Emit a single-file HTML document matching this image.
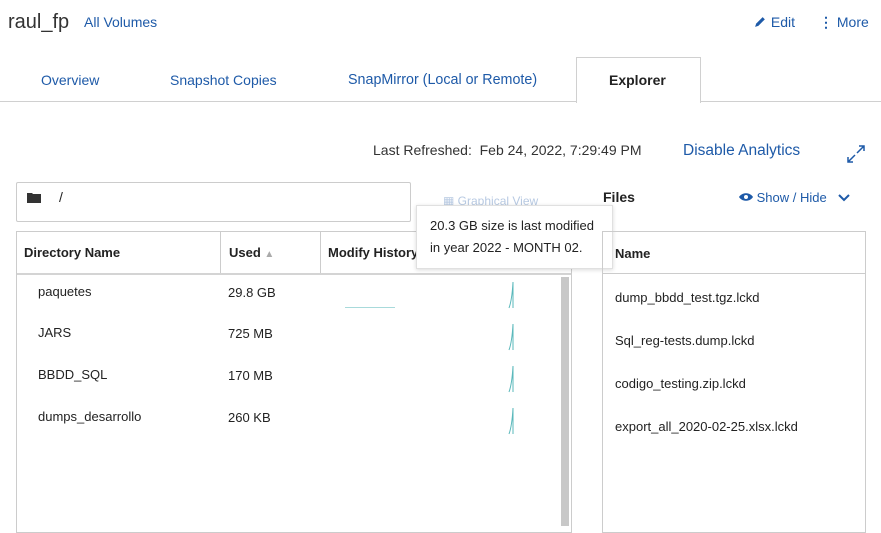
<!DOCTYPE html>
<html><head><meta charset="utf-8"><style>
body{margin:0;width:881px;height:526px;overflow:hidden;background:#fff;font-family:"Liberation Sans",sans-serif;color:#222;position:relative}
.a{position:absolute;white-space:nowrap}
.b{color:#1e5aa8}
.s13{font-size:13px}
</style></head><body>
<div class="a" style="left:8px;top:11px;font-size:20px;color:#333">raul_fp</div>
<div class="a b" style="left:84px;top:14px;font-size:14px">All Volumes</div>
<div class="a b" style="left:754px;top:14px;font-size:14px">
<svg width="13" height="13" viewBox="0 0 12 12" style="vertical-align:-1px"><path d="M1 11l1-3 6-6 2 2-6 6z" fill="#1e5aa8"/></svg> Edit</div>
<div class="a b" style="left:819px;top:14px;font-size:14px"><span style="font-weight:bold">&#8942;</span> More</div>
<div class="a" style="left:0;top:101px;width:881px;height:1px;background:#d0d0d0"></div>
<div class="a" style="left:576px;top:57px;width:123px;height:45px;border:1px solid #d0d0d0;border-bottom:none;background:#fff"></div>
<div class="a b" style="left:41px;top:72px;font-size:14px">Overview</div>
<div class="a b" style="left:170px;top:72px;font-size:14px">Snapshot Copies</div>
<div class="a b" style="left:348px;top:72px;font-size:14.3px">SnapMirror (Local or Remote)</div>
<div class="a" style="left:609px;top:72px;font-size:14px;font-weight:bold;color:#222">Explorer</div>
<div class="a" style="left:373px;top:142px;font-size:14px;color:#333">Last Refreshed:&nbsp; Feb 24, 2022, 7:29:49 PM</div>
<div class="a b" style="left:683px;top:142px;font-size:15.5px">Disable Analytics</div>
<svg class="a" style="left:847px;top:145px" width="18" height="18" viewBox="0 0 18 18" fill="none" stroke="#1e5aa8" stroke-width="1.5"><path d="M10 8l7-7M12 1h5v5M8 10l-7 7M1 12v5h5"/></svg>
<div class="a" style="left:16px;top:182px;width:393px;height:38px;border:1px solid #ccc;border-radius:2px"></div>
<svg class="a" style="left:27px;top:192px" width="14" height="11" viewBox="0 0 14 11"><path d="M0 1h5l1 1h8v9H0z" fill="#333"/></svg>
<div class="a" style="left:59px;top:189px;font-size:14px">/</div>
<div class="a" style="left:443px;top:194px;font-size:12px;color:#b7c9e2">&#9638; Graphical View</div>
<div class="a" style="left:603px;top:189px;font-size:14px;font-weight:bold">Files</div>
<div class="a b" style="left:739px;top:190px;font-size:13px">
<svg width="14" height="10" viewBox="0 0 14 10" style="vertical-align:0"><path d="M0 5C3 0 11 0 14 5 11 10 3 10 0 5z" fill="#1e5aa8"/><circle cx="7" cy="5" r="2" fill="#fff"/></svg> Show / Hide
<svg width="12" height="8" viewBox="0 0 12 8" style="margin-left:8px"><path d="M1 1l5 5 5-5" stroke="#1e5aa8" stroke-width="2" fill="none"/></svg></div>
<div class="a" style="left:16px;top:231px;width:554px;height:300px;border:1px solid #ccc"></div>
<div class="a" style="left:17px;top:273px;width:554px;height:2px;background:#d4d4d4"></div>
<div class="a" style="left:220px;top:232px;width:1px;height:41px;background:#ccc"></div>
<div class="a" style="left:320px;top:232px;width:1px;height:41px;background:#ccc"></div>
<div class="a s13" style="left:24px;top:245px;font-weight:bold">Directory Name</div>
<div class="a s13" style="left:229px;top:245px;font-weight:bold">Used <span style="color:#aaa;font-size:10px">&#9650;&#xFE0E;</span></div>
<div class="a s13" style="left:328px;top:245px;font-weight:bold">Modify History</div>
<div class="a" style="left:561px;top:277px;width:8px;height:249px;background:#c8c8c8"></div>
<div class="a s13" style="left:38px;top:284px">paquetes</div><div class="a s13" style="left:228px;top:285px">29.8 GB</div>
<div class="a s13" style="left:38px;top:325px">JARS</div><div class="a s13" style="left:228px;top:326px">725 MB</div>
<div class="a s13" style="left:38px;top:367px">BBDD_SQL</div><div class="a s13" style="left:228px;top:368px">170 MB</div>
<div class="a s13" style="left:38px;top:409px">dumps_desarrollo</div><div class="a s13" style="left:228px;top:410px">260 KB</div>
<div class="a" style="left:345px;top:307px;width:50px;height:1px;background:#a8dadb"></div>
<svg class="a" style="left:505px;top:280px" width="12" height="160" viewBox="0 0 12 160" fill="none" stroke="#5ab8bb" stroke-width="1"><path d="M4 28Q7 20 8 2M8 2v26M4 70Q7 62 8 44M8 44v26M4 112Q7 104 8 86M8 86v26M4 154Q7 146 8 128M8 128v26"/></svg>
<div class="a" style="left:416px;top:205px;width:195px;height:62px;background:#fff;border:1px solid #e0e0e0;box-shadow:0 1px 4px rgba(0,0,0,.15)"></div>
<div class="a s13" style="left:430px;top:215px;line-height:22px">20.3 GB size is last modified<br>in year 2022 - MONTH 02.</div>
<div class="a" style="left:602px;top:231px;width:262px;height:300px;border:1px solid #ccc"></div>
<div class="a" style="left:603px;top:273px;width:262px;height:1px;background:#ccc"></div>
<div class="a s13" style="left:615px;top:246px;font-weight:bold">Name</div>
<div class="a s13" style="left:615px;top:290px">dump_bbdd_test.tgz.lckd</div>
<div class="a s13" style="left:615px;top:333px">Sql_reg-tests.dump.lckd</div>
<div class="a s13" style="left:615px;top:376px">codigo_testing.zip.lckd</div>
<div class="a s13" style="left:615px;top:419px">export_all_2020-02-25.xlsx.lckd</div>
</body></html>
